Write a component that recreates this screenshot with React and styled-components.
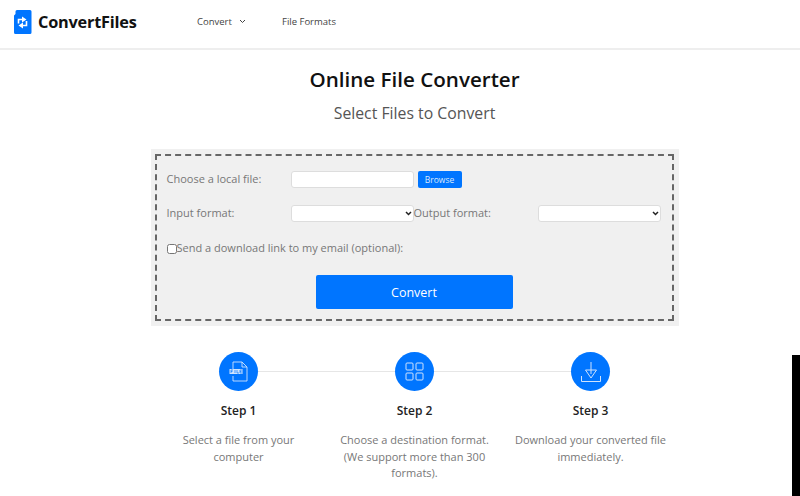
import React from 'react';
import styled, { createGlobalStyle } from 'styled-components';

const GlobalStyle = createGlobalStyle`
	html, body {
		margin: 0;
		padding: 0;
		height: 496px;
		overflow: hidden;
		background: #fff;
		font-family: "Open Sans", "Liberation Sans", sans-serif;
	}
	* {
		box-sizing: border-box;
	}
`;

const Header = styled.header`
	height: 50px;
	display: flex;
	align-items: center;
	padding: 0 0 5px 13px;
	border-bottom: 2px solid #eee;
`;

const Logo = styled.div`
	width: 184px;
	display: flex;
	align-items: center;
	gap: 6px;
	font-size: 16.3px;
	font-weight: 700;
	letter-spacing: -0.2px;
	color: #111;
`;

const NavItem = styled.a`
	display: flex;
	align-items: center;
	gap: 7px;
	width: ${props => props.$width}px;
	font-size: 9.5px;
	color: #444;
`;

const Main = styled.main`
	display: flex;
	flex-direction: column;
	align-items: center;
	padding-left: 29px;
`;

const Title = styled.h1`
	margin: 14px 0 0;
	font-size: 20.6px;
	line-height: 30px;
	font-weight: 600;
	color: #111;
`;

const Subtitle = styled.h2`
	margin: 7px 0 0;
	font-size: 15.8px;
	line-height: 24px;
	font-weight: 400;
	color: #555;
`;

const Panel = styled.div`
	width: 528px;
	height: 177px;
	margin-top: 24px;
	padding: 5px 5px 5px 4px;
	background: #f0f0f0;
`;

const Dashed = styled.form`
	height: 100%;
	padding: 14px 11px 0 10px;
	border: 2px dashed #666;
`;

const Row = styled.div`
	display: flex;
	align-items: center;
	height: 18px;
	margin-bottom: ${props => props.$gap}px;
	font-size: 11px;
	color: #777;
`;

const Label = styled.label`
	width: ${props => props.$width}px;
	flex: none;
	padding-bottom: 2px;
`;

const TextBox = styled.div`
	width: 123px;
	height: 17px;
	background: #fff;
	border: 1px solid #ddd;
	border-radius: 3px;
`;

const Select = styled.select`
	width: 123px;
	height: 17px;
	flex: none;
	padding: 0;
	appearance: none;
	background: #fff url("data:image/svg+xml,%3Csvg xmlns='http://www.w3.org/2000/svg' width='7' height='5'%3E%3Cpath d='M1 1l2.500 2.500L6 1' fill='none' stroke='%23222' stroke-width='1.500'/%3E%3C/svg%3E") no-repeat right 1px center;
	border: 1px solid #ddd;
	border-radius: 3px;
	font-size: 10px;
`;

const Browse = styled.button`
	width: 44px;
	height: 17px;
	margin-left: 4px;
	padding: 0;
	border: none;
	border-radius: 2px;
	background: #0075ff;
	color: #dbe9fb;
	font-family: inherit;
	font-size: 8.500px;
`;

const Check = styled.input`
	width: 10px;
	height: 10px;
	margin: 1px 0 0;
	flex: none;
`;

const ConvertButton = styled.button`
	display: block;
	width: 197px;
	height: 34px;
	margin: 0 0 0 149px;
	border: none;
	border-radius: 2px;
	background: #0075ff;
	color: #fff;
	font-family: inherit;
	font-size: 12.500px;
`;

const Steps = styled.div`
	position: relative;
	display: flex;
	width: 528px;
	margin-top: 26px;
	justify-content: center;

	&::before {
		content: '';
		position: absolute;
		left: 87px;
		width: 352px;
		top: 19px;
		height: 1px;
		background: #e6e6e6;
	}
`;

const Step = styled.div`
	position: relative;
	width: 176px;
	display: flex;
	flex-direction: column;
	align-items: center;
	text-align: center;
`;

const Circle = styled.div`
	width: 39px;
	height: 39px;
	display: flex;
	align-items: center;
	justify-content: center;
	border-radius: 50%;
	background: #0075ff;
`;

const StepTitle = styled.div`
	margin-top: 11px;
	font-size: 12px;
	line-height: 18px;
	font-weight: 600;
	color: #222;
`;

const StepText = styled.p`
	margin: 12px 0 0;
	width: 155px;
	font-size: 11px;
	line-height: 16.500px;
	color: #777;
`;

const BlackBar = styled.div`
	position: absolute;
	right: 0;
	top: 355px;
	bottom: 0;
	width: 8px;
	background: #000;
`;

const LogoIcon = () => (
	<svg width="19" height="24" viewBox="0 0 19 24">
		<path d="M4 0h13a1.500 1.500 0 0 1 1.500 1.500v21A1.500 1.500 0 0 1 17 24H2.500A1.500 1.500 0 0 1 1 22.500V5.500l1.500-1.500V1.500A1.500 1.500 0 0 1 4 0z" fill="#0075ff" />
		<path d="M5.500 13.500V9.500h4M13.500 11v4.500h-4" fill="none" stroke="#fff" strokeWidth="1.600" />
		<path d="M9 6.500l4.500 3-4.500 3zM10 12.500v6l-4.500-3z" fill="#fff" />
	</svg>
);

const Chevron = () => (
	<svg width="7" height="5" viewBox="0 0 7 5">
		<path d="M1 1l2.500 2.500L6 1" fill="none" stroke="#444" strokeWidth="1" />
	</svg>
);

const FileIcon = () => (
	<svg width="20" height="21" viewBox="0 0 20 21" fill="none" stroke="#cfe3fd" strokeWidth="0.900">
		<path d="M4 8V1h9l5 5v14H4v-5M13 1v5h5" />
		<rect x="0.500" y="8" width="13" height="5" fill="#cfe3fd" stroke="none" />
		<path d="M2 9v3M2 9h2M2 10.500h1.500M6 9v3M8 9v3h2M11 9v3h2M11 9h2M11 10.500h1.500" stroke="#0075ff" strokeWidth="0.700" />
	</svg>
);

const GridIcon = () => (
	<svg width="19" height="19" viewBox="0 0 19 19" fill="none" stroke="#cfe3fd" strokeWidth="1">
		<rect x="1" y="1" width="7" height="7" rx="1" />
		<rect x="11" y="1" width="7" height="7" rx="1" />
		<rect x="1" y="11" width="7" height="7" rx="1" />
		<rect x="11" y="11" width="7" height="7" rx="1" />
	</svg>
);

const DownloadIcon = () => (
	<svg width="20" height="20" viewBox="0 0 20 20" fill="none" stroke="#cfe3fd" strokeWidth="1">
		<path d="M10 0v12M4.500 8h11L10 16zM0.500 14v5.500h19V14" />
	</svg>
);

export default function App() {
	return (
		<>
			<GlobalStyle />
			<Header>
				<Logo>
					<LogoIcon />
					ConvertFiles
				</Logo>
				<NavItem $width={85}>
					Convert <Chevron />
				</NavItem>
				<NavItem $width={70}>File Formats</NavItem>
			</Header>
			<Main>
				<Title>Online File Converter</Title>
				<Subtitle>Select Files to Convert</Subtitle>
				<Panel>
					<Dashed>
						<Row $gap={16}>
							<Label $width={124}>Choose a local file:</Label>
							<TextBox />
							<Browse type="button">Browse</Browse>
						</Row>
						<Row $gap={17}>
							<Label $width={124}>Input format:</Label>
							<Select />
							<Label $width={124}>Output format:</Label>
							<Select />
						</Row>
						<Row $gap={18}>
							<Check type="checkbox" />
							<Label>Send a download link to my email (optional):</Label>
						</Row>
						<ConvertButton type="button">Convert</ConvertButton>
					</Dashed>
				</Panel>
				<Steps>
					<Step>
						<Circle><FileIcon /></Circle>
						<StepTitle>Step 1</StepTitle>
						<StepText>Select a file from your computer</StepText>
					</Step>
					<Step>
						<Circle><GridIcon /></Circle>
						<StepTitle>Step 2</StepTitle>
						<StepText>Choose a destination format. (We support more than 300 formats).</StepText>
					</Step>
					<Step>
						<Circle><DownloadIcon /></Circle>
						<StepTitle>Step 3</StepTitle>
						<StepText>Download your converted file immediately.</StepText>
					</Step>
				</Steps>
			</Main>
			<BlackBar />
		</>
	);
}
